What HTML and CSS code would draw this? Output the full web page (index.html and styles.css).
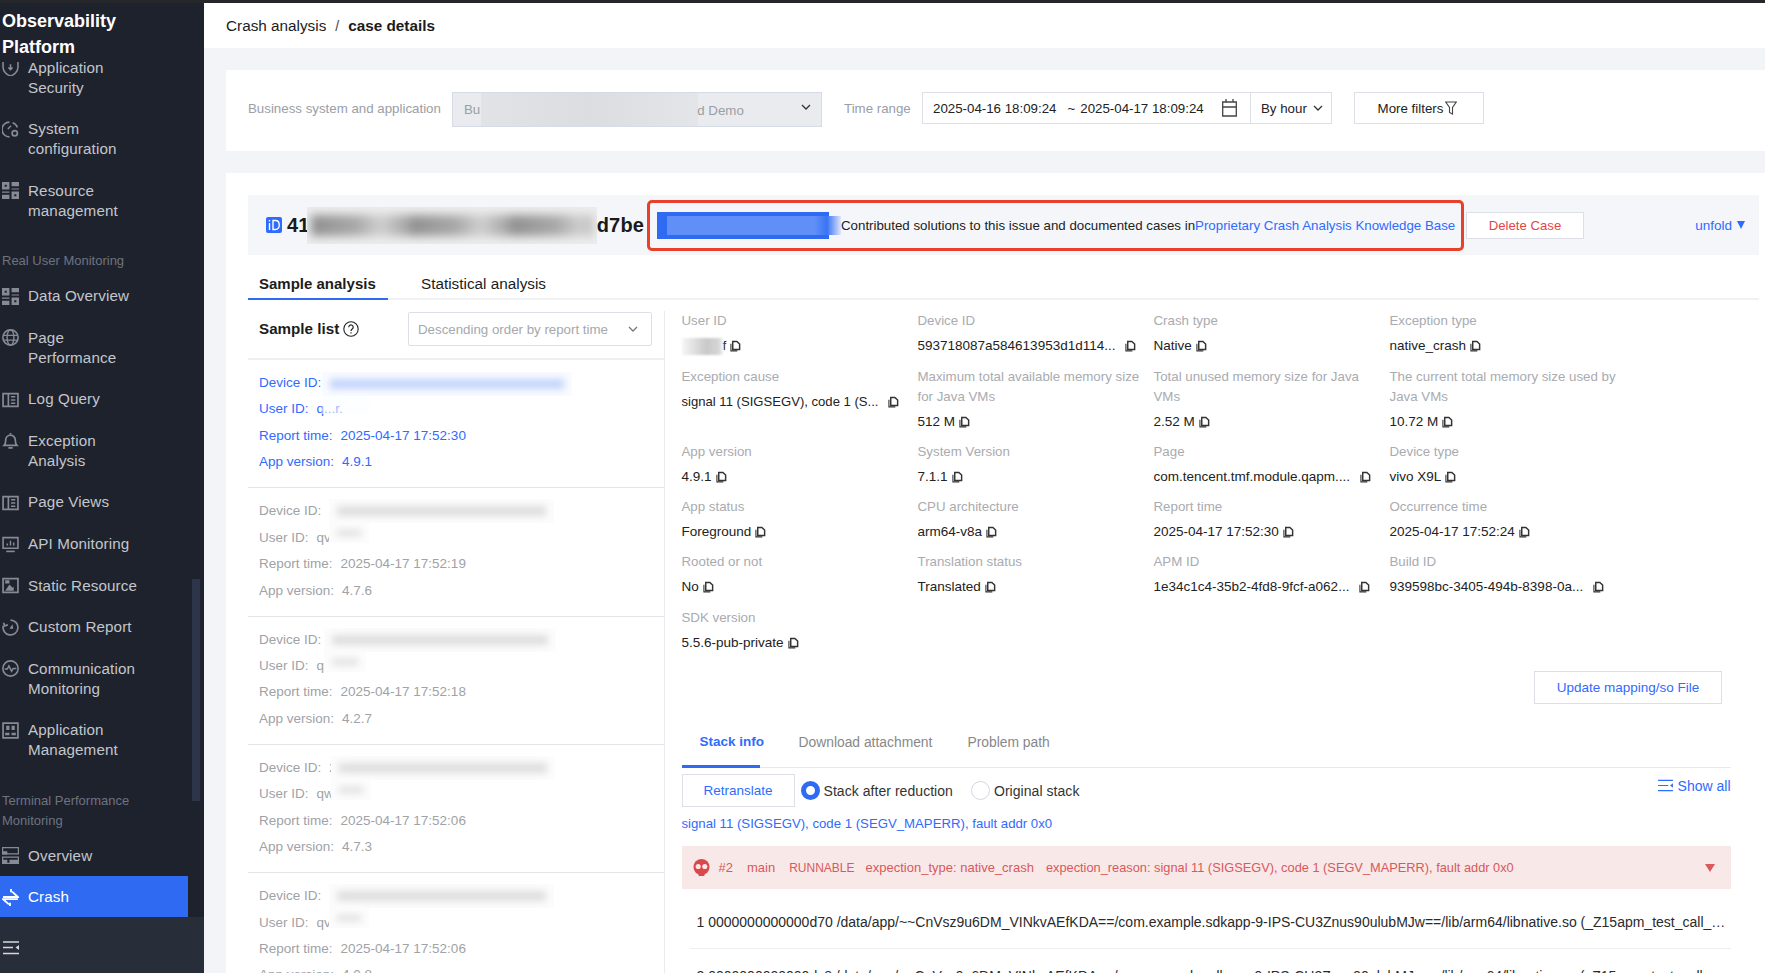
FILE: index.html
```html
<!DOCTYPE html>
<html lang="en">
<head>
<meta charset="utf-8">
<title>Crash analysis - case details</title>
<link rel="stylesheet" href="styles.css">
</head>
<body>
<svg class="defs" width="0" height="0" aria-hidden="true">
  <symbol id="i-copy" viewBox="0 0 12 12"><path d="M1 3.500V11.300H8" fill="none" stroke="currentColor" stroke-width="1.200"/><path d="M3 1h4.500L10.500 3.800V9.800H3z" fill="none" stroke="currentColor" stroke-width="1.600"/></symbol>
  <symbol id="i-chev" viewBox="0 0 12 12"><path d="M2 4l4 4 4-4" fill="none" stroke="currentColor" stroke-width="1.300"/></symbol>
  <symbol id="i-grid" viewBox="0 0 16 16"><path d="M0 0h7v7H0zM9 0h7v4H9zM9 6h7v1H9zM0 9h7v1H0zM0 12h7v4H0zM9 9h7v7H9z" fill="currentColor"/><path d="M2.500 2.500h2v2h-2zM11.500 11.500h2v2h-2z" fill="#1e222d"/></symbol>
  <symbol id="i-book" viewBox="0 0 16 16"><path d="M1 2.500h14v12H1zM6 2.500v12" fill="none" stroke="currentColor" stroke-width="1.600"/><path d="M8.500 5.500h4M8.500 8.500h4M8.500 11.500h4" stroke="currentColor" stroke-width="1.400"/></symbol>
</svg>

<div class="topline"></div>
<div class="app">
  <aside class="sidebar">
    <div class="brand">Observability Platform</div>
    <nav class="nav">
      <div class="nav-inner">
        <a class="item"><svg class="ico" viewBox="0 0 16 16"><path d="M1 2c2 0 5-1 7-2 2 1 5 2 7 2v6c0 4-4 7-7 8-3-1-7-4-7-8z" fill="none" stroke="currentColor" stroke-width="1.500"/><path d="M8 5v4M6 8l2 2 2-2" fill="none" stroke="currentColor" stroke-width="1.500"/></svg><span>Application Security</span></a>
        <a class="item"><svg class="ico" viewBox="0 0 16 16"><path d="M7 1a7 7 0 1 0 0 14M10 1.600A7 7 0 0 1 14.500 6" fill="none" stroke="currentColor" stroke-width="1.600"/><path d="M5 7l3-3 1 1-3 3z" fill="currentColor"/><circle cx="12" cy="11.500" r="2.500" fill="none" stroke="currentColor" stroke-width="1.600"/></svg><span>System configuration</span></a>
        <a class="item"><svg class="ico"><use href="#i-grid"/></svg><span>Resource management</span></a>
        <div class="section">Real User Monitoring</div>
        <a class="item"><svg class="ico"><use href="#i-grid"/></svg><span>Data Overview</span></a>
        <a class="item"><svg class="ico" viewBox="0 0 16 16"><circle cx="8" cy="8" r="7.200" fill="none" stroke="currentColor" stroke-width="1.500"/><ellipse cx="8" cy="8" rx="3.200" ry="7.200" fill="none" stroke="currentColor" stroke-width="1.300"/><path d="M1 6h14M1 10.500h14" stroke="currentColor" stroke-width="1.300"/></svg><span>Page Performance</span></a>
        <a class="item"><svg class="ico"><use href="#i-book"/></svg><span>Log Query</span></a>
        <a class="item"><svg class="ico" viewBox="0 0 16 16"><path d="M2 12.500c1-1 1.500-2 1.500-5a4.500 4.500 0 0 1 9 0c0 3 .5 4 1.500 5z" fill="none" stroke="currentColor" stroke-width="1.600"/><path d="M6 15h4M8 1V2" stroke="currentColor" stroke-width="1.600"/></svg><span>Exception Analysis</span></a>
        <a class="item"><svg class="ico"><use href="#i-book"/></svg><span>Page Views</span></a>
        <a class="item"><svg class="ico" viewBox="0 0 16 16"><path d="M1 1.500h14v10H1z" fill="none" stroke="currentColor" stroke-width="1.500"/><path d="M4 14.500h8" stroke="currentColor" stroke-width="1.500"/><path d="M5 9V7M8 9V4.500M11 9V6" stroke="currentColor" stroke-width="1.400"/></svg><span>API Monitoring</span></a>
        <a class="item"><svg class="ico" viewBox="0 0 16 16"><path d="M1 1.500h14v13H1z" fill="none" stroke="currentColor" stroke-width="1.600"/><path d="M3 13l4-6 3 3 1-1v4zM3 3h4v3H3z" fill="currentColor"/></svg><span>Static Resource</span></a>
        <a class="item"><svg class="ico" viewBox="0 0 16 16"><path d="M8 1a7 7 0 1 1-6.800 5.400M1.500 3.500l1 3 3-1" fill="none" stroke="currentColor" stroke-width="1.600"/><path d="M7 9l3-4 .5 4.500z" fill="currentColor"/></svg><span>Custom Report</span></a>
        <a class="item"><svg class="ico" viewBox="0 0 16 16"><circle cx="8" cy="8" r="7.200" fill="none" stroke="currentColor" stroke-width="1.500"/><path d="M2.500 8.500h2.500l1.500-3 2.500 5 1.500-2.500h3" fill="none" stroke="currentColor" stroke-width="1.400"/></svg><span>Communication Monitoring</span></a>
        <a class="item"><svg class="ico" viewBox="0 0 16 16"><path d="M1 1h14v14H1z" fill="none" stroke="currentColor" stroke-width="1.600"/><path d="M4 3.500h3v4H4zM9 3.500h3v4H9zM3 10h4v2.500H3zM9 10h4v2.500H9z" fill="currentColor"/></svg><span>Application Management</span></a>
        <div class="section">Terminal Performance Monitoring</div>
        <a class="item"><svg class="ico" viewBox="0 0 16 16"><path d="M.500.500h15v6H.500zM.500 9.500h15v6H.500z" fill="none" stroke="currentColor" stroke-width="1.300"/><path d="M0 4h5v3H0zM0 12h5v3H0zM7 12h9v3H7z" fill="currentColor"/></svg><span>Overview</span></a>
        <a class="item active"><svg class="ico" viewBox="0 0 16 16"><path d="M1 7.500h14L9.500 2.500M15 9.500H1l5.500 5" fill="none" stroke="currentColor" stroke-width="1.800"/><path d="M8.500 0v3M7.500 13v3" stroke="currentColor" stroke-width="1.800"/></svg><span>Crash</span></a>
      </div>
      <div class="scrollbar"></div>
    </nav>
    <div class="side-foot"><svg class="ico foot-ico" viewBox="0 0 16 14"><path d="M0 1h16M0 6.500h10M0 12.500h16" stroke="currentColor" stroke-width="1.500"/><path d="M16 4v5l-3.500-2.500z" fill="currentColor"/></svg></div>
  </aside>

  <main class="main">
    <header class="crumb"><span>Crash analysis</span><span class="crumb-sep">/</span><b>case details</b></header>

    <section class="card filters">
      <label class="f-label">Business system and application</label>
      <div class="f-select"><span>Bu</span><span class="smear-flat"></span><span class="demo">d Demo</span><svg class="chev"><use href="#i-chev"/></svg></div>
      <label class="f-label f-time">Time range</label>
      <div class="f-date"><span>2025-04-16 18:09:24</span><span class="tilde">~</span><span>2025-04-17 18:09:24</span>
        <svg class="cal" viewBox="0 0 15 18"><path d="M.700 3h13.600v14H.700zM.700 8h13.600M4 0v3M11 0v3" fill="none" stroke="#444" stroke-width="1.300"/></svg></div>
      <div class="f-hour"><span>By hour</span><svg class="chev"><use href="#i-chev"/></svg></div>
      <div class="f-more"><span>More filters</span><svg class="funnel" viewBox="0 0 12 14"><path d="M.700 1h10.600L7.500 6.500V13l-3-1.500v-5z" fill="none" stroke="#444" stroke-width="1.100"/></svg></div>
    </section>

    <section class="card body">
      <div class="case">
        <svg class="id-ico" viewBox="0 0 16 16"><rect width="16" height="16" rx="2" fill="#2f6bff"/><path d="M3.500 3v1.500M3.500 6v7M7 3.500h2.500c5 0 5 9 0 9H7z" fill="none" stroke="#fff" stroke-width="1.400"/></svg>
        <div class="case-id"><span>41</span><span class="smear-id"></span><span>d7be</span></div>
        <div class="note">
          <span class="note-blue"></span>
          <span class="note-text">Contributed solutions to this issue and documented cases in<a class="link">Proprietary Crash Analysis Knowledge Base</a></span>
        </div>
        <button class="btn btn-del">Delete Case</button>
        <a class="unfold">unfold <span class="unfold-tri"></span></a>
      </div>

      <div class="tabs">
        <a class="tab on">Sample analysis</a>
        <a class="tab">Statistical analysis</a>
      </div>

      <div class="split">
        <div class="left">
          <div class="list-head">
            <b class="list-title">Sample list</b>
            <svg class="help" viewBox="0 0 16 16"><circle cx="8" cy="8" r="7.200" fill="none" stroke="#222" stroke-width="1.100"/><path d="M5.800 6.200a2.200 2.200 0 1 1 3.400 1.800c-.8.500-1.200 1-1.200 2" fill="none" stroke="#222" stroke-width="1.200"/><path d="M8 11.200v1.400" stroke="#222" stroke-width="1.200"/></svg>
            <div class="list-select"><span>Descending order by report time</span><svg class="chev"><use href="#i-chev"/></svg></div>
          </div>

          <div class="sample on">
            <p><span class="k">Device ID:</span></p><p><span class="k">User ID:</span>q...r.</p><p><span class="k">Report time:</span>2025-04-17 17:52:30</p><p><span class="k">App version:</span>4.9.1</p>
            <span class="smear sm-blue sm-a1"></span><span class="smear sm-veil sm-b1"></span>
          </div>
          <div class="sample">
            <p><span class="k">Device ID:</span></p><p><span class="k">User ID:</span>qv</p><p><span class="k">Report time:</span>2025-04-17 17:52:19</p><p><span class="k">App version:</span>4.7.6</p>
            <span class="smear sm-a2"></span><span class="smear sm-b2"></span>
          </div>
          <div class="sample">
            <p><span class="k">Device ID:</span></p><p><span class="k">User ID:</span>q</p><p><span class="k">Report time:</span>2025-04-17 17:52:18</p><p><span class="k">App version:</span>4.2.7</p>
            <span class="smear sm-a3"></span><span class="smear sm-b3"></span>
          </div>
          <div class="sample">
            <p><span class="k">Device ID:</span>2</p><p><span class="k">User ID:</span>qw</p><p><span class="k">Report time:</span>2025-04-17 17:52:06</p><p><span class="k">App version:</span>4.7.3</p>
            <span class="smear sm-a4"></span><span class="smear sm-b4"></span>
          </div>
          <div class="sample">
            <p><span class="k">Device ID:</span></p><p><span class="k">User ID:</span>qv</p><p><span class="k">Report time:</span>2025-04-17 17:52:06</p><p><span class="k">App version:</span>4.0.8</p>
            <span class="smear sm-a2"></span><span class="smear sm-b2"></span>
          </div>
        </div>

        <div class="right">
          <div class="details">
            <div class="d"><div class="dl">User ID</div><div class="dv"><span class="smear-user"></span>f<svg class="cp"><use href="#i-copy"/></svg></div></div>
            <div class="d"><div class="dl">Device ID</div><div class="dv">593718087a584613953d1d114...<svg class="cp cp-wide"><use href="#i-copy"/></svg></div></div>
            <div class="d"><div class="dl">Crash type</div><div class="dv">Native<svg class="cp"><use href="#i-copy"/></svg></div></div>
            <div class="d"><div class="dl">Exception type</div><div class="dv">native_crash<svg class="cp"><use href="#i-copy"/></svg></div></div>

            <div class="d"><div class="dl">Exception cause</div><div class="dv dv-tight">signal 11 (SIGSEGV), code 1 (S...<svg class="cp cp-wide"><use href="#i-copy"/></svg></div></div>
            <div class="d"><div class="dl">Maximum total available memory size for Java VMs</div><div class="dv">512 M<svg class="cp"><use href="#i-copy"/></svg></div></div>
            <div class="d"><div class="dl">Total unused memory size for Java VMs</div><div class="dv">2.52 M<svg class="cp"><use href="#i-copy"/></svg></div></div>
            <div class="d"><div class="dl">The current total memory size used by Java VMs</div><div class="dv">10.72 M<svg class="cp"><use href="#i-copy"/></svg></div></div>

            <div class="d"><div class="dl">App version</div><div class="dv">4.9.1<svg class="cp"><use href="#i-copy"/></svg></div></div>
            <div class="d"><div class="dl">System Version</div><div class="dv">7.1.1<svg class="cp"><use href="#i-copy"/></svg></div></div>
            <div class="d"><div class="dl">Page</div><div class="dv">com.tencent.tmf.module.qapm....<svg class="cp cp-wide"><use href="#i-copy"/></svg></div></div>
            <div class="d"><div class="dl">Device type</div><div class="dv">vivo X9L<svg class="cp"><use href="#i-copy"/></svg></div></div>

            <div class="d"><div class="dl">App status</div><div class="dv">Foreground<svg class="cp"><use href="#i-copy"/></svg></div></div>
            <div class="d"><div class="dl">CPU architecture</div><div class="dv">arm64-v8a<svg class="cp"><use href="#i-copy"/></svg></div></div>
            <div class="d"><div class="dl">Report time</div><div class="dv">2025-04-17 17:52:30<svg class="cp"><use href="#i-copy"/></svg></div></div>
            <div class="d"><div class="dl">Occurrence time</div><div class="dv">2025-04-17 17:52:24<svg class="cp"><use href="#i-copy"/></svg></div></div>

            <div class="d"><div class="dl">Rooted or not</div><div class="dv">No<svg class="cp"><use href="#i-copy"/></svg></div></div>
            <div class="d"><div class="dl">Translation status</div><div class="dv">Translated<svg class="cp"><use href="#i-copy"/></svg></div></div>
            <div class="d"><div class="dl">APM ID</div><div class="dv">1e34c1c4-35b2-4fd8-9fcf-a062...<svg class="cp cp-wide"><use href="#i-copy"/></svg></div></div>
            <div class="d"><div class="dl">Build ID</div><div class="dv">939598bc-3405-494b-8398-0a...<svg class="cp cp-wide"><use href="#i-copy"/></svg></div></div>

            <div class="d"><div class="dl">SDK version</div><div class="dv">5.5.6-pub-private<svg class="cp"><use href="#i-copy"/></svg></div></div>
          </div>

          <div class="update-row"><button class="btn btn-update">Update mapping/so File</button></div>

          <div class="subtabs">
            <a class="subtab on">Stack info</a>
            <a class="subtab">Download attachment</a>
            <a class="subtab">Problem path</a>
          </div>

          <div class="stack-tools">
            <button class="btn btn-re">Retranslate</button>
            <span class="radio on"></span><span class="radio-text">Stack after reduction</span>
            <span class="radio"></span><span class="radio-text">Original stack</span>
            <a class="showall"><svg class="sa-ico" viewBox="0 0 16 14"><path d="M0 1.500h16M0 7h11M0 12.500h16" stroke="currentColor" stroke-width="1.300"/><path d="M16 4.500v5L13 7z" fill="currentColor"/></svg>Show all</a>
          </div>

          <div class="signal">signal 11 (SIGSEGV), code 1 (SEGV_MAPERR), fault addr 0x0</div>

          <div class="thread">
            <svg class="skull" viewBox="0 0 18 18"><circle cx="9" cy="8.500" r="8.500" fill="#d9484a"/><rect x="6" y="14" width="6" height="4" fill="#d9484a"/><circle cx="5.500" cy="8" r="2.700" fill="#f8e8e8"/><circle cx="12.500" cy="8" r="2.700" fill="#f8e8e8"/></svg>
            <span class="t1">#2</span><span class="t2">main</span><span class="t3">RUNNABLE</span><span class="t4">expection_type: native_crash</span><span class="t5">expection_reason: signal 11 (SIGSEGV), code 1 (SEGV_MAPERR), fault addr 0x0</span>
            <span class="tri"></span>
          </div>

          <div class="frame"><span>1 0000000000000d70 /data/app/~~CnVsz9u6DM_VINkvAEfKDA==/com.example.sdkapp-9-IPS-CU3Znus90ulubMJw==/lib/arm64/libnative.so (_Z15apm_test_call_4apm_test_call_4dummy)</span></div>
          <div class="frame"><span>2 0000000000000dc8 /data/app/~~CnVsz9u6DM_VINkvAEfKDA==/com.example.sdkapp-9-IPS-CU3Znus90ulubMJw==/lib/arm64/libnative.so (_Z15apm_test_call_4apm_test_call_4dummy)</span></div>
        </div>
      </div>
    </section>
  </main>
</div>
</body>
</html>
```
FILE: styles.css
```css
* { box-sizing: border-box; }
html, body { margin: 0; height: 973px; overflow: hidden; }
body { font-family: "Liberation Sans", Arial, sans-serif; font-size: 14px; color: #1c1c1c; background: #f3f4f8; }
.defs { position: absolute; }
p { margin: 0; }
button { font: inherit; background: #fff; cursor: pointer; }

.topline { height: 3px; background: #25272b; }
.app { display: flex; height: 970px; }

/* Sidebar */
.sidebar { width: 204px; flex: none; background: #1e222d; color: #c3c6cc; display: flex; flex-direction: column; }
.brand { height: 59px; padding: 5px 2px 0; font-size: 18px; line-height: 26px; font-weight: 700; color: #fff; width: 170px; flex: none; }
.nav { flex: 1; overflow: hidden; position: relative; }
.nav-inner { margin-top: -15px; width: 188px; }
.item { display: flex; padding: 10.800px 10px 10.800px 2px; font-size: 15.200px; line-height: 20px; gap: 9px; align-items: flex-start; }
.item span { max-width: 122px; letter-spacing: .12px; }
.ico { width: 17px; height: 17px; flex: none; margin-top: 1.500px; color: #868a94; }
.item.active { background: #2f6bf2; color: #fff; }
.item.active .ico { color: #fff; }
.section { padding: 19.500px 30px 4px 2px; font-size: 13px; line-height: 20px; color: #6e7380; }
.scrollbar { position: absolute; left: 192px; top: 517px; width: 8px; height: 222px; background: #2c3549; }
.side-foot { height: 56px; flex: none; background: #282d3a; padding: 24px 0 0 3px; }
.foot-ico { color: #d5d7db; margin: 0; height: 14px; width: 16px; }

/* Main */
.main { flex: 1; min-width: 0; }
.crumb { height: 45px; background: #fff; padding: 0 22px; display: flex; align-items: center; font-size: 15.300px; margin-bottom: 22px; }
.crumb-sep { margin: 0 9px; color: #444; font-size: 14px; }
.crumb b { font-weight: 700; }
.card { background: #fff; margin-left: 22px; }

/* Filters */
.filters { height: 81px; padding: 22px 0 0 22px; display: flex; align-items: flex-start; margin-bottom: 22px; font-size: 13.300px; }
.f-label { color: #9a9ea6; line-height: 33px; width: 193px; white-space: nowrap; }
.f-time { width: 66px; margin-left: 22px; }
.f-select { width: 370px; height: 35px; margin-left: 11px; background: #e9ebef; border: 1px solid #d6dce6; display: flex; align-items: center; padding-left: 11px; color: #9a9ea6; position: relative; }
.smear-flat { width: 217px; height: 33px; margin: 0 -1px 0 1px; background: linear-gradient(90deg, #e2e3e6, #dcdde0 50%, #e4e5e8); }
.demo { padding-top: 2px; }
.chev { width: 12px; height: 12px; flex: none; color: #333; }
.f-select .chev { margin-left: auto; margin-right: 9px; margin-top: -5px; }
.f-date { width: 328px; height: 32px; margin-left: 12px; border: 1px solid #dcdfe6; border-right: 0; display: flex; align-items: center; padding-left: 10px; color: #222; white-space: nowrap; }
.tilde { margin: 0 5px 0 11px; }
.cal { width: 15px; height: 18px; margin-left: 18px; }
.f-hour { width: 82px; height: 32px; border: 1px solid #dcdfe6; display: flex; align-items: center; padding-left: 10px; gap: 5px; color: #222; }
.f-more { width: 130px; height: 32px; margin-left: 22px; border: 1px solid #dcdfe6; display: flex; align-items: center; justify-content: center; gap: 2px; color: #222; padding-right: 3px; }
.funnel { width: 12px; height: 14px; }

/* Body card */
.body { padding: 22px 6px 0 22px; height: 800px; }
.case { height: 60px; background: #f5f6fa; display: flex; align-items: center; padding-left: 18px; }
.id-ico { width: 16px; height: 16px; flex: none; }
.case-id { margin-left: 5px; font-size: 20px; font-weight: 700; display: flex; align-items: center; white-space: nowrap; color: #1a1a1a; width: 358px; letter-spacing: .2px; }
.smear-id { width: 290px; height: 37px; margin-left: -3px; background: #ededed; position: relative; overflow: hidden; }
.smear-id::after { content: ""; position: absolute; left: 4px; right: 4px; top: 8px; bottom: 8px; background: repeating-linear-gradient(90deg, #8f8f8f 0, #a8a8a8 45px, #cfcfcf 70px, #a0a0a0 100px); filter: blur(5px); }
.note { width: 817px; height: 51px; margin-left: 2px; flex: none; border: 3px solid #e8402a; border-radius: 5px; display: flex; align-items: center; padding-left: 7px; }
.note-blue { width: 172px; height: 27px; flex: none; background: #2f6bf2; position: relative; }
.note-blue::after { content: ""; position: absolute; left: 10px; right: -12px; top: 4px; bottom: 4px; background: linear-gradient(90deg, #5f8ff7, #5f8ff7 85%, #3a74f5 92%, #dfe6fa); }
.note-text { margin-left: 12px; font-size: 13.300px; white-space: nowrap; color: #222; }
.link { color: #2f6bff; }
.btn { border: 1px solid #dcdfe6; height: 27px; padding: 0; color: #2f6bff; }
.btn-del { width: 118px; margin-left: 2px; color: #e54545; font-size: 13.200px; flex: none; }
.unfold { margin-left: auto; margin-right: 14px; color: #2f6bff; font-size: 13.500px; white-space: nowrap; display: flex; align-items: center; gap: 5px; }
.unfold-tri { width: 0; height: 0; border-left: 4.500px solid transparent; border-right: 4.500px solid transparent; border-top: 8px solid #2f6bff; }

.tabs { display: flex; height: 45px; border-bottom: 2px solid #f0f1f3; }
.tab { height: 45px; padding: 19px 11px 0; line-height: 20px; font-size: 15.300px; width: 140px; white-space: nowrap; }
.tab.on { font-weight: 700; font-size: 15px; border-bottom: 2px solid #2f6bf2; }
.tab + .tab { margin-left: 22px; }

.split { display: flex; margin-top: 11px; }
.left { width: 417px; flex: none; border-right: 1px solid #e9eaed; height: 700px; }
.list-head { height: 49px; display: flex; padding-left: 11px; align-items: flex-start; border-bottom: 2px solid #eeeff1; position: relative; }
.list-title { font-size: 15.200px; line-height: 36px; }
.help { width: 16px; height: 16px; margin: 10px 0 0 4px; flex: none; }
.list-select { position: absolute; left: 160px; top: 1px; width: 244px; height: 34px; border: 1px solid #dcdfe6; border-radius: 2px; display: flex; align-items: center; justify-content: space-between; padding: 0 12px 0 9px; color: #a5a8ae; font-size: 13.300px; }
.list-select .chev { color: #777; }
.sample { position: relative; padding: 10px 0 11.700px 11px; border-bottom: 1px solid #e4e5e8; color: #a0a2a6; font-size: 13.500px; }
.sample p { line-height: 26.400px; white-space: nowrap; }
.sample.on { color: #2f6bff; }
.k { margin-right: 8px; }
.smear { position: absolute; height: 24px; background: #fcfcfc; overflow: hidden; }
.smear::after { content: ""; position: absolute; inset: 7px 8px; background: #dedede; filter: blur(3.500px); }
.sm-blue { background: #f9fbff; }
.sm-blue::after { background: #c3d4fb; }
.sm-veil { background: rgba(252, 253, 255, .55); }
.sm-veil::after { display: none; }
.sm-a1 { left: 74px; top: 12px; width: 250px; }
.sm-b1 { left: 74px; top: 36px; width: 48px; height: 18px; }
.sm-a2 { left: 81px; top: 11px; width: 225px; }
.sm-b2 { left: 81px; top: 35px; width: 40px; height: 20px; }
.sm-a3 { left: 76px; top: 11px; width: 232px; }
.sm-b3 { left: 76px; top: 35px; width: 42px; height: 20px; }
.sm-a4 { left: 83px; top: 11px; width: 224px; }
.sm-b4 { left: 83px; top: 35px; width: 40px; height: 20px; }

/* Details */
.right { flex: 1; min-width: 0; padding-left: 16.500px; padding-right: 28.500px; }
.details { display: grid; grid-template-columns: repeat(4, 236px); row-gap: 10.300px; font-size: 13.500px; padding-top: .3px; }
.d { padding-right: 8px; }
.dl { line-height: 20px; color: #a9abb0; margin-bottom: 5px; font-size: 13.300px; }
.dv { line-height: 20px; color: #222; white-space: nowrap; display: flex; align-items: center; }
.dv-tight { font-size: 13.100px; }
.cp { width: 11px; height: 12px; margin-left: 4px; color: #333; flex: none; }
.cp-wide { margin-left: 10px; }
.smear-user { width: 41px; height: 17px; background: linear-gradient(90deg, #f6f6f6, #c9c9c9 60%, #d6d6d6 90%, #f4f4f4); filter: blur(1px); }
.update-row { display: flex; justify-content: flex-end; margin: 18.700px 8.500px 0 0; }
.btn-update { width: 188px; height: 33px; font-size: 13.500px; }

.subtabs { display: flex; height: 53px; margin-top: 11px; border-bottom: 1px solid #e8e9ec; font-size: 13.850px; }
.subtab { padding-top: 17px; line-height: 20px; color: #888; white-space: nowrap; margin-left: 35px; }
.subtab.on { width: 78px; height: 53px; margin-left: 0; padding-left: 18px; font-weight: 700; color: #2f6bff; border-bottom: 3px solid #2f6bf2; font-size: 13.500px; }
.subtab.on + .subtab { margin-left: 39px; }

.stack-tools { display: flex; align-items: center; margin-top: 6px; height: 33px; font-size: 14px; }
.btn-re { width: 113px; height: 33px; font-size: 13.500px; }
.radio { width: 19px; height: 19px; border-radius: 50%; border: 1px solid #d3d7e0; margin-left: 6px; flex: none; }
.radio.on { border: 5px solid #2f6bf2; }
.radio-text { margin: 0 18px 0 4px; color: #333; letter-spacing: .05px; }
.radio-text + .radio { margin-left: 0; }
.showall { margin-left: auto; color: #2f6bff; font-size: 14px; display: flex; align-items: center; padding-bottom: 10px; gap: 5px; }
.sa-ico { width: 15px; height: 13px; }
.signal { margin-top: 7px; line-height: 20px; color: #2f6bff; font-size: 13.200px; }
.thread { margin-top: 12px; height: 43px; background: #f8e8e8; display: flex; align-items: center; padding-left: 11px; color: #d9595c; font-size: 13px; white-space: nowrap; }
.skull { width: 17px; height: 17px; flex: none; }
.t1 { margin-left: 9px; }
.t2 { margin-left: 14px; }
.t3 { margin-left: 14px; font-size: 12px; }
.t4 { margin-left: 11px; }
.t5 { margin-left: 12px; font-size: 12.800px; }
.tri { margin-left: auto; margin-right: 16px; width: 0; height: 0; border-left: 5px solid transparent; border-right: 5px solid transparent; border-top: 8px solid #d9595c; }
.frame { margin-left: 8px; height: 60px; padding: 23px 0 0 7px; border-bottom: 1px solid #eeeff1; line-height: 20px; font-size: 14px; color: #2a2a2a; }
.frame + .frame { padding-top: 17px; }
.frame span { display: block; overflow: hidden; text-overflow: ellipsis; white-space: nowrap; }
```
